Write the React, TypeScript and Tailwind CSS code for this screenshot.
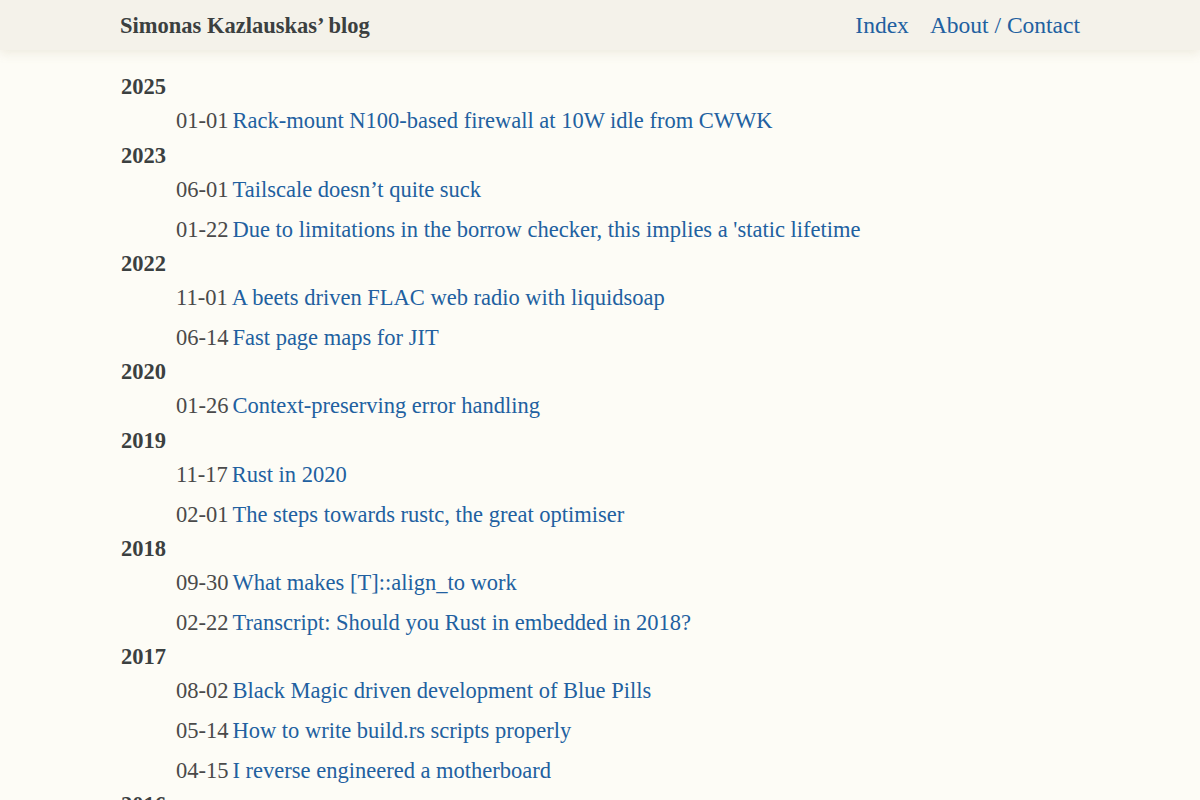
const posts: { year: string; items: [string, string][] }[] = [
  { year: '2025', items: [['01-01', 'Rack-mount N100-based firewall at 10W idle from CWWK']] },
  {
    year: '2023',
    items: [
      ['06-01', 'Tailscale doesn’t quite suck'],
      ['01-22', "Due to limitations in the borrow checker, this implies a 'static lifetime"],
    ],
  },
  {
    year: '2022',
    items: [
      ['11-01', 'A beets driven FLAC web radio with liquidsoap'],
      ['06-14', 'Fast page maps for JIT'],
    ],
  },
  { year: '2020', items: [['01-26', 'Context-preserving error handling']] },
  {
    year: '2019',
    items: [
      ['11-17', 'Rust in 2020'],
      ['02-01', 'The steps towards rustc, the great optimiser'],
    ],
  },
  {
    year: '2018',
    items: [
      ['09-30', 'What makes [T]::align_to work'],
      ['02-22', 'Transcript: Should you Rust in embedded in 2018?'],
    ],
  },
  {
    year: '2017',
    items: [
      ['08-02', 'Black Magic driven development of Blue Pills'],
      ['05-14', 'How to write build.rs scripts properly'],
      ['04-15', 'I reverse engineered a motherboard'],
    ],
  },
  { year: '2016', items: [] },
];

export default function App() {
  return (
    <div className="h-screen overflow-hidden bg-[#fdfcf6] font-['Liberation_Serif',serif] text-[22.5px] text-[#444]">
      {/* Header */}
      <header className="h-[50px] bg-[#f4f2ea] shadow-[0_3px_10px_rgba(236,233,220,0.9)]">
        <div className="mx-auto flex h-full max-w-[960px] items-center justify-between pt-[1px]">
          <a className="font-bold text-[#3b4040]">Simonas Kazlauskas’ blog</a>
          <nav className="flex gap-[21px] text-[23.5px] text-[#2160a0]">
            <a>Index</a>
            <a>About / Contact</a>
          </nav>
        </div>
      </header>

      {/* Posts */}
      <main className="mx-auto max-w-[960px] pt-[23px]">
        {posts.map((g) => (
          <section key={g.year}>
            <h2 className="h-[34.25px] pl-[1px] font-bold leading-[28px] text-[#3b4040]">{g.year}</h2>
            <ul className="space-y-[5.5px]">
              {g.items.map(([d, t]) => (
                <li key={d + t} className="flex h-[34.25px] items-start pl-[56px] leading-[28px]">
                  <span className="mr-[4px] text-[#4a4a4a]">{d}</span>
                  <a className="text-[#2160a0]">{t}</a>
                </li>
              ))}
            </ul>
          </section>
        ))}
      </main>
    </div>
  );
}
